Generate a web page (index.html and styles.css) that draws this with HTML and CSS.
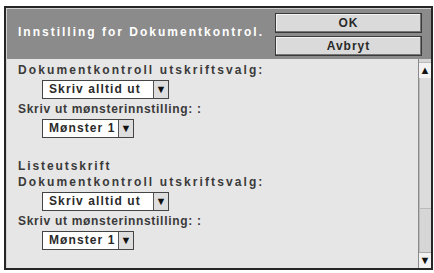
FILE: index.html
```html
<!doctype html>
<html lang="no">
<head>
    <meta charset="UTF-8">
    <title>Innstilling for Dokumentkontrol.</title>
    <link rel="stylesheet" href="styles.css">
</head>
<body>
<div class="frame">
    <div class="head">
        <div class="head__title">Innstilling for Dokumentkontrol.</div>
        <div class="head__btns">
            <button class="btn">OK</button>
            <button class="btn">Avbryt</button>
        </div>
    </div>
    <div class="body">
        <div class="list">
            <div class="label label--wide">Dokumentkontroll utskriftsvalg:</div>
            <div class="select select--long"><span class="select__val">Skriv alltid ut</span><span class="select__arr">&#9660;</span></div>
            <div class="label">Skriv ut mønsterinnstilling: :</div>
            <div class="select select--short"><span class="select__val">Mønster 1</span><span class="select__arr">&#9660;</span></div>

            <div class="label label--wide label--group">Listeutskrift</div>
            <div class="label label--wide">Dokumentkontroll utskriftsvalg:</div>
            <div class="select select--long"><span class="select__val">Skriv alltid ut</span><span class="select__arr">&#9660;</span></div>
            <div class="label">Skriv ut mønsterinnstilling: :</div>
            <div class="select select--short"><span class="select__val">Mønster 1</span><span class="select__arr">&#9660;</span></div>
        </div>
        <div class="scroll">
            <div class="scroll__btn">&#9650;</div>
            <div class="scroll__track"><div class="scroll__thumb"></div></div>
            <div class="scroll__btn">&#9660;</div>
        </div>
    </div>
</div>
</body>
</html>
```

FILE: styles.css
```css
body,html{margin:0;padding:0;background:#fff;font-family:'Liberation Sans',Arial,sans-serif;font-size:12px}
.frame{box-sizing:border-box;width:429px;height:264px;margin:6px 0 0 4px;border:2px solid #262626;padding:1px 0 0 1px;background:#d2d2d2;display:flex;flex-direction:column}
.head{display:flex;justify-content:space-between;height:50px;box-sizing:border-box;padding:4px 9px 3px 11px;background:#8b8b8b}
.head__title{padding-top:12px;color:#fff;font-weight:bold;letter-spacing:2px;line-height:15px}
.head__btns{display:flex;flex-direction:column;gap:3px}
.btn{box-sizing:border-box;width:147px;height:20px;margin:0;padding:0;background:#dadada;border:1px solid #3a3a3a;box-shadow:inset -1px -1px 0 #777,inset 1px 1px 0 #f4f4f4;font-family:inherit;font-size:12px;font-weight:bold;letter-spacing:1px;color:#2a2a2a}
.body{flex:1;display:flex;background:#e6e6e6;min-height:0}
.list{flex:1;padding:3px 0 0 11px;color:#3a3a3a;font-weight:bold}
.label{line-height:16px;letter-spacing:0.7px}
.label--wide{letter-spacing:2.1px}
.label--group{margin-top:20px;letter-spacing:1.9px}
.select{display:flex;width:max-content;margin:2px 0 2px 24px;height:19px;box-sizing:border-box;border:1px solid #444;background:#fff}
.select__val{line-height:17px;padding:0 0 0 6px;letter-spacing:1.1px;color:#2a2a2a}
.select--long .select__val{width:104px}
.select--short .select__val{width:69px}
.select__arr{width:14px;border-left:1px solid #555;background:#dedede;font-size:11px;line-height:17px;text-align:center;color:#111}
.scroll{width:12px;display:flex;flex-direction:column;border-left:1px solid #8a8a8a;background:#d6d6d6}
.scroll__btn{height:15px;margin:3px 0 0;background:#f2f2f2;border-top:1px solid #bbb;font-size:11px;line-height:15px;text-align:center;color:#111}
.scroll__btn:last-child{margin:0;border-top:1px solid #aaa}
.scroll__track{flex:1;border-left:1px solid #bcbcbc}
.scroll__thumb{height:130px;border-bottom:1px solid #bbb;background:#dcdcdc}
```
